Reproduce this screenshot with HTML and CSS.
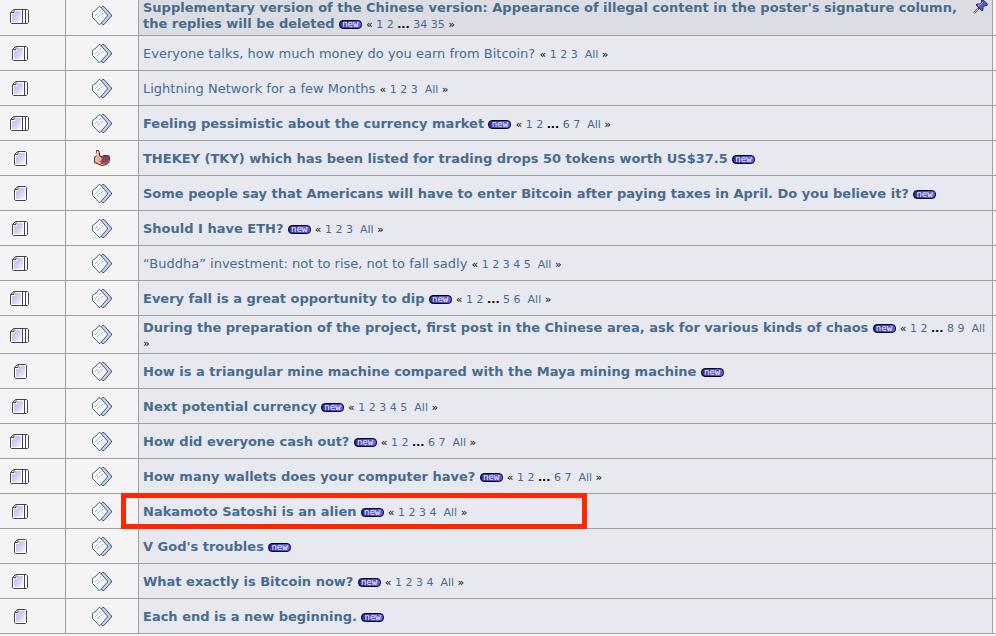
FILE: index.html
```
<!DOCTYPE html>
<html lang="en">

<head>
    <meta charset="UTF-8">
    <meta name="viewport" content="width=device-width, initial-scale=1.0">
    <title>Forum topics</title>
    <link rel="stylesheet" href="styles.css">
</head>

<body>
    <!-- Icon shapes used by the rows -->
    <svg class="sprites" aria-hidden="true">
        <defs>
            <linearGradient id="paper" x1="0" y1="0" x2="1" y2="1">
                <stop offset="0" stop-color="#bcbce2" />
                <stop offset="0.5" stop-color="#cfcff0" />
                <stop offset="1" stop-color="#f8f8ff" />
            </linearGradient>
            <linearGradient id="sheet" x1="0" y1="0" x2="1" y2="1">
                <stop offset="0" stop-color="#ffffff" />
                <stop offset="1" stop-color="#e4eff8" />
            </linearGradient>
            <symbol id="page" viewBox="0 0 13 15">
                <path d="M3.5 .5H11.5L12.5 1.5V13.5L11.5 14.5H1.5L.5 13.5V3.5Z" fill="#fff" stroke="#444448" />
                <path d="M5 2H11V13H2V5H5Z" fill="url(#paper)" />
                <path d="M4 1V3.5H1" fill="none" stroke="#444448" />
            </symbol>
            <symbol id="pages" viewBox="0 0 16 15">
                <path d="M3.5 .5H14.5L15.5 1.5V13.5L14.5 14.5H1.5L.5 13.5V3.5Z" fill="#fff" stroke="#444448" />
                <path d="M5 2H11V13H2V5H5Z" fill="url(#paper)" />
                <path d="M4 1V3.5H1M12.5 1V14" fill="none" stroke="#444448" />
            </symbol>
            <symbol id="stack" viewBox="0 0 20 15">
                <path d="M3.5 .5H17.5L18.5 1.5V13.5L17.5 14.5H1.5L.5 13.5V3.5Z" fill="#fff" stroke="#444448" />
                <path d="M5 2H11V13H2V5H5Z" fill="url(#paper)" />
                <path d="M4 1V3.5H1M12.5 1V14M15.5 1V14" fill="none" stroke="#444448" />
            </symbol>
            <symbol id="post" viewBox="0 0 20 19">
                <path d="M10.5 .5H12L19.5 9V10L12 18.5H10.5L8 15.5L13 9L8 3Z" fill="#c0cefa" stroke="#484c60" />
                <path d="M7 .5H8L15.5 9V10L8 18.5H7L4.5 15.5L.5 11.5V6.5L4 4Z" fill="url(#sheet)" stroke="#566068" />
                <path d="M3 10L6 7M5 12L8 9M7 6L9 4M9 9L11 7" fill="none" stroke="#a9b6c4" />
            </symbol>
            <symbol id="thumb" viewBox="0 0 16 16">
                <path d="M2.5 .5H4.5L5.5 2.5V6L8 6.5L9.5 5.5H14.5L15.5 7V10L14.5 13L12.5 14.5L8 15.5L3 13.5L.5 12.5V7L3.5 5.5Z" fill="#e8ac96" stroke="#5b2c30" />
                <path d="M9 6H15V10L14 13L12 14L7 14L6 11L8 9Z" fill="#a2565c" />
                <path d="M7 8L10 7H15M8 10L11 9H15M8 12L11 11H14" fill="none" stroke="#742f3c" />
                <path d="M3.5 1V6L2 8V11" fill="none" stroke="#f9d0b6" />
            </symbol>
            <symbol id="pin" viewBox="0 0 15 15">
                <path d="M6 8L1 13" stroke="#555" stroke-width="2" />
                <path d="M5 9L1 13" stroke="#c8c8bc" />
                <path d="M8.5 .5L10 0L14.5 4L14 5.5L12 5.5L10 7.5V10L9 11L3 5L4 4H6.5L8.5 2.5Z" fill="#5a5ac4" stroke="#292967" />
                <path d="M10 2L7 5L5 5" fill="none" stroke="#a9a9ef" />
            </symbol>
        </defs>
    </svg>

    <table class="topics">
        <colgroup>
            <col class="col-status">
            <col class="col-icon">
            <col>
            <col class="col-next">
        </colgroup>
        <tbody>
            <tr class="sticky">
                <td><svg class="stack"><use href="#stack" /></svg></td>
                <td><svg class="post"><use href="#post" /></svg></td>
                <td class="subject"><svg class="pin"><use href="#pin" /></svg><a class="unread" href="#">Supplementary version of the Chinese version: Appearance of illegal content in the poster's signature column, the replies will be deleted</a> <a class="new" href="#">new</a> <small>« <a href="#">1</a> <a href="#">2</a> <b>...</b> <a href="#">34</a> <a href="#">35</a> »</small></td>
                <td></td>
            </tr>
            <tr>
                <td><svg class="pages"><use href="#pages" /></svg></td>
                <td><svg class="post"><use href="#post" /></svg></td>
                <td class="subject"><a href="#">Everyone talks, how much money do you earn from Bitcoin?</a> <small>« <a href="#">1</a> <a href="#">2</a> <a href="#">3</a> &nbsp;<a href="#">All</a> »</small></td>
                <td></td>
            </tr>
            <tr>
                <td><svg class="pages"><use href="#pages" /></svg></td>
                <td><svg class="post"><use href="#post" /></svg></td>
                <td class="subject"><a href="#">Lightning Network for a few Months</a> <small>« <a href="#">1</a> <a href="#">2</a> <a href="#">3</a> &nbsp;<a href="#">All</a> »</small></td>
                <td></td>
            </tr>
            <tr>
                <td><svg class="stack"><use href="#stack" /></svg></td>
                <td><svg class="post"><use href="#post" /></svg></td>
                <td class="subject"><a class="unread" href="#">Feeling pessimistic about the currency market</a> <a class="new" href="#">new</a> <small>« <a href="#">1</a> <a href="#">2</a> <b>...</b> <a href="#">6</a> <a href="#">7</a> &nbsp;<a href="#">All</a> »</small></td>
                <td></td>
            </tr>
            <tr>
                <td><svg class="page"><use href="#page" /></svg></td>
                <td><svg class="thumb"><use href="#thumb" /></svg></td>
                <td class="subject"><a class="unread" href="#">THEKEY (TKY) which has been listed for trading drops 50 tokens worth US$37.5</a> <a class="new" href="#">new</a></td>
                <td></td>
            </tr>
            <tr>
                <td><svg class="page"><use href="#page" /></svg></td>
                <td><svg class="post"><use href="#post" /></svg></td>
                <td class="subject"><a class="unread" href="#">Some people say that Americans will have to enter Bitcoin after paying taxes in April. Do you believe it?</a> <a class="new" href="#">new</a></td>
                <td></td>
            </tr>
            <tr>
                <td><svg class="pages"><use href="#pages" /></svg></td>
                <td><svg class="post"><use href="#post" /></svg></td>
                <td class="subject"><a class="unread" href="#">Should I have ETH?</a> <a class="new" href="#">new</a> <small>« <a href="#">1</a> <a href="#">2</a> <a href="#">3</a> &nbsp;<a href="#">All</a> »</small></td>
                <td></td>
            </tr>
            <tr>
                <td><svg class="pages"><use href="#pages" /></svg></td>
                <td><svg class="post"><use href="#post" /></svg></td>
                <td class="subject"><a href="#">“Buddha” investment: not to rise, not to fall sadly</a> <small>« <a href="#">1</a> <a href="#">2</a> <a href="#">3</a> <a href="#">4</a> <a href="#">5</a> &nbsp;<a href="#">All</a> »</small></td>
                <td></td>
            </tr>
            <tr>
                <td><svg class="stack"><use href="#stack" /></svg></td>
                <td><svg class="post"><use href="#post" /></svg></td>
                <td class="subject"><a class="unread" href="#">Every fall is a great opportunity to dip</a> <a class="new" href="#">new</a> <small>« <a href="#">1</a> <a href="#">2</a> <b>...</b> <a href="#">5</a> <a href="#">6</a> &nbsp;<a href="#">All</a> »</small></td>
                <td></td>
            </tr>
            <tr>
                <td><svg class="stack"><use href="#stack" /></svg></td>
                <td><svg class="post"><use href="#post" /></svg></td>
                <td class="subject"><a class="unread" href="#">During the preparation of the project, first post in the Chinese area, ask for various kinds of chaos</a> <a class="new" href="#">new</a> <small>« <a href="#">1</a> <a href="#">2</a> <b>...</b> <a href="#">8</a> <a href="#">9</a> &nbsp;<a href="#">All</a> »</small></td>
                <td></td>
            </tr>
            <tr>
                <td><svg class="page"><use href="#page" /></svg></td>
                <td><svg class="post"><use href="#post" /></svg></td>
                <td class="subject"><a class="unread" href="#">How is a triangular mine machine compared with the Maya mining machine</a> <a class="new" href="#">new</a></td>
                <td></td>
            </tr>
            <tr>
                <td><svg class="pages"><use href="#pages" /></svg></td>
                <td><svg class="post"><use href="#post" /></svg></td>
                <td class="subject"><a class="unread" href="#">Next potential currency</a> <a class="new" href="#">new</a> <small>« <a href="#">1</a> <a href="#">2</a> <a href="#">3</a> <a href="#">4</a> <a href="#">5</a> &nbsp;<a href="#">All</a> »</small></td>
                <td></td>
            </tr>
            <tr>
                <td><svg class="stack"><use href="#stack" /></svg></td>
                <td><svg class="post"><use href="#post" /></svg></td>
                <td class="subject"><a class="unread" href="#">How did everyone cash out?</a> <a class="new" href="#">new</a> <small>« <a href="#">1</a> <a href="#">2</a> <b>...</b> <a href="#">6</a> <a href="#">7</a> &nbsp;<a href="#">All</a> »</small></td>
                <td></td>
            </tr>
            <tr>
                <td><svg class="stack"><use href="#stack" /></svg></td>
                <td><svg class="post"><use href="#post" /></svg></td>
                <td class="subject"><a class="unread" href="#">How many wallets does your computer have?</a> <a class="new" href="#">new</a> <small>« <a href="#">1</a> <a href="#">2</a> <b>...</b> <a href="#">6</a> <a href="#">7</a> &nbsp;<a href="#">All</a> »</small></td>
                <td></td>
            </tr>
            <tr>
                <td><svg class="pages"><use href="#pages" /></svg></td>
                <td><svg class="post"><use href="#post" /></svg></td>
                <td class="subject marked"><a class="unread" href="#">Nakamoto Satoshi is an alien</a> <a class="new" href="#">new</a> <small>« <a href="#">1</a> <a href="#">2</a> <a href="#">3</a> <a href="#">4</a> &nbsp;<a href="#">All</a> »</small></td>
                <td></td>
            </tr>
            <tr>
                <td><svg class="page"><use href="#page" /></svg></td>
                <td><svg class="post"><use href="#post" /></svg></td>
                <td class="subject"><a class="unread" href="#">V God's troubles</a> <a class="new" href="#">new</a></td>
                <td></td>
            </tr>
            <tr>
                <td><svg class="pages"><use href="#pages" /></svg></td>
                <td><svg class="post"><use href="#post" /></svg></td>
                <td class="subject"><a class="unread" href="#">What exactly is Bitcoin now?</a> <a class="new" href="#">new</a> <small>« <a href="#">1</a> <a href="#">2</a> <a href="#">3</a> <a href="#">4</a> &nbsp;<a href="#">All</a> »</small></td>
                <td></td>
            </tr>
            <tr>
                <td><svg class="page"><use href="#page" /></svg></td>
                <td><svg class="post"><use href="#post" /></svg></td>
                <td class="subject"><a class="unread" href="#">Each end is a new beginning.</a> <a class="new" href="#">new</a></td>
                <td></td>
            </tr>
        </tbody>
    </table>
</body>

</html>
```
FILE: styles.css
```
body {
    margin: 0;
    background-color: #f4f4f4;
    color: #000;
    font-family: Verdana, "DejaVu Sans", sans-serif;
    font-size: 13px;
    line-height: 15px;
}

.sprites {
    position: absolute;
    width: 0;
    height: 0;
}

/* the list starts partway through its first row */
.topics {
    width: 100%;
    margin-top: -4px;
    table-layout: fixed;
    border-collapse: separate;
    border-spacing: 0;
}

.col-status {
    width: 66px;
}

.col-icon {
    width: 73px;
}

.col-next {
    width: 3px;
}

.topics td {
    box-sizing: border-box;
    height: 35px;
    padding: 0;
    border-right: 1px solid #a0a0a0;
    border-bottom: 1px solid #a0a0a0;
    vertical-align: middle;
    text-align: center;
}

.topics td:first-child {
    padding-right: 25px;
}

.topics td:last-child {
    border-right: none;
}

.topics .subject {
    padding: 4px 4px 3px;
    background-color: #e8e8f1;
    text-align: left;
}

.sticky {
    line-height: 16px;
}

.topics .sticky td {
    height: 40px;
}

.topics .sticky .subject {
    background-color: #dcdce4;
}

a {
    color: #476c8e;
    text-decoration: none;
}

a:hover {
    text-decoration: underline;
}

.unread {
    font-weight: bold;
}

small {
    font-size: 11px;
    line-height: 11px;
}

svg {
    display: inline-block;
    vertical-align: middle;
}

.page {
    width: 13px;
    height: 15px;
}

.pages {
    width: 16px;
    height: 15px;
}

.stack {
    width: 20px;
    height: 15px;
}

.post {
    width: 20px;
    height: 19px;
}

.thumb {
    width: 16px;
    height: 16px;
}

.pin {
    float: right;
    width: 15px;
    height: 15px;
}

.new {
    display: inline-block;
    box-sizing: border-box;
    width: 23px;
    height: 9px;
    border: 1px solid #000;
    border-radius: 4px;
    background: linear-gradient(to right, #2d2da8, #6464f4);
    color: #fff;
    font-family: "DejaVu Sans Mono", monospace;
    font-size: 9px;
    line-height: 6px;
    text-align: center;
    vertical-align: middle;
}

/* red frame around the highlighted topic */
.marked {
    position: relative;
}

.marked::after {
    content: "";
    position: absolute;
    top: -1px;
    left: -18px;
    box-sizing: border-box;
    width: 466px;
    height: 36px;
    border: 5px solid #ff2600;
    pointer-events: none;
}
```
